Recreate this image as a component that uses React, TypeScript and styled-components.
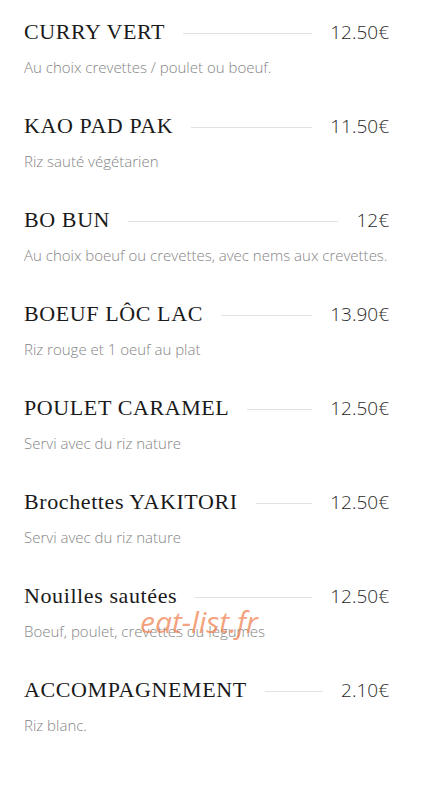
import styled, { createGlobalStyle } from "styled-components";

const GlobalStyle = createGlobalStyle`
    html, body {
        margin: 0;
        padding: 0;
        background: #ffffff;
    }
`;

const Page = styled.div`
    position: relative;
    width: 426px;
    min-height: 786px;
    padding: 18px 37px 0 24px;
    box-sizing: border-box;
`;

const Item = styled.div`
    display: flex;
    flex-direction: column;
    margin-bottom: 35px;
`;

const Row = styled.div`
    display: flex;
    align-items: center;
    height: 28px;
    gap: 18px;
`;

const Title = styled.h3`
    margin: 0;
    font-family: "Liberation Serif", "Times New Roman", serif;
    font-weight: 400;
    font-size: 22px;
    color: #1a1a1a;
    white-space: nowrap;
    letter-spacing: 0.6px;
`;

const Line = styled.span`
    flex: 1;
    height: 1px;
    margin-top: 3px;
    background: #e2e2e2;
`;

const Price = styled.span`
    font-family: "Open Sans", "Liberation Sans", sans-serif;
    font-weight: 300;
    font-size: 19px;
    color: #2a2a2a;
    white-space: nowrap;
`;

const Desc = styled.p`
    margin: 11px 0 0;
    height: 20px;
    line-height: 20px;
    font-family: "Open Sans", "Liberation Sans", sans-serif;
    font-weight: 300;
    font-size: 15px;
    color: #858585;
    white-space: nowrap;
`;

const Watermark = styled.span`
    position: absolute;
    left: 140px;
    top: 601px;
    font-family: "Open Sans", "Liberation Sans", sans-serif;
    font-style: italic;
    font-size: 30px;
    color: rgba(240, 125, 75, 0.72);
    pointer-events: none;
`;

const items = [
    { name: "CURRY VERT", price: "12.50€", desc: "Au choix crevettes / poulet ou boeuf." },
    { name: "KAO PAD PAK", price: "11.50€", desc: "Riz sauté végétarien" },
    { name: "BO BUN", price: "12€", desc: "Au choix boeuf ou crevettes, avec nems aux crevettes." },
    { name: "BOEUF LÔC LAC", price: "13.90€", desc: "Riz rouge et 1 oeuf au plat" },
    { name: "POULET CARAMEL", price: "12.50€", desc: "Servi avec du riz nature" },
    { name: "Brochettes YAKITORI", price: "12.50€", desc: "Servi avec du riz nature" },
    { name: "Nouilles sautées", price: "12.50€", desc: "Boeuf, poulet, crevettes ou légumes" },
    { name: "ACCOMPAGNEMENT", price: "2.10€", desc: "Riz blanc." },
];

export default function App() {
    return (
        <Page>
            <GlobalStyle />
            {items.map((item) => (
                <Item key={item.name}>
                    <Row>
                        <Title>{item.name}</Title>
                        <Line />
                        <Price>{item.price}</Price>
                    </Row>
                    <Desc>{item.desc}</Desc>
                </Item>
            ))}
            <Watermark>eat-list.fr</Watermark>
        </Page>
    );
}
